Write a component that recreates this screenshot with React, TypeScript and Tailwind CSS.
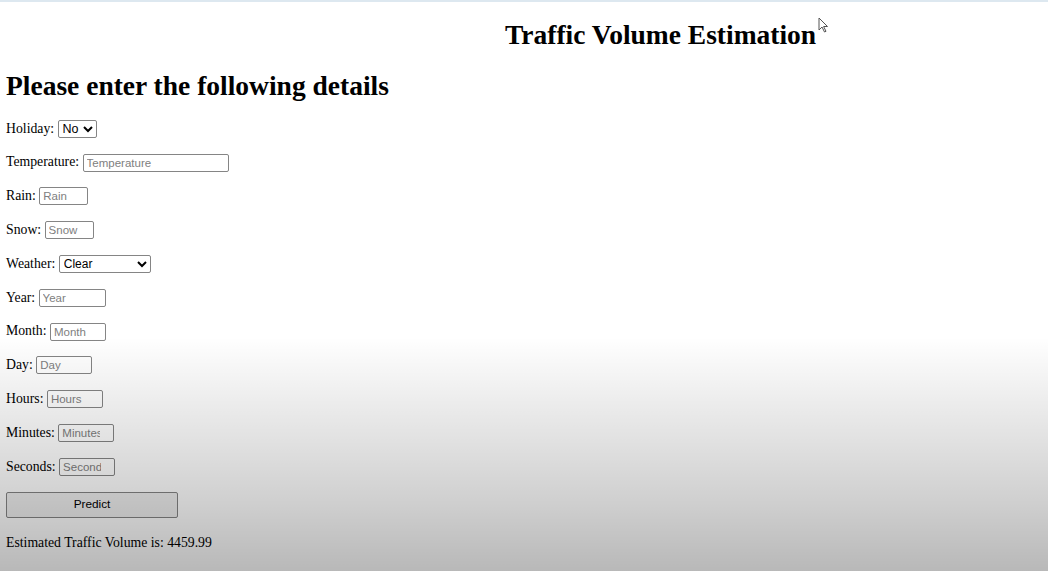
import React from 'react';

const serif = { fontFamily: '"Liberation Serif", "Times New Roman", serif' };

const fields: { label: string; w: string; num?: boolean }[] = [
  { label: 'Temperature', w: 'w-[146px]' },
  { label: 'Rain', w: 'w-[49px]' },
  { label: 'Snow', w: 'w-[49px]' },
];
const fields2: { label: string; w: string; num?: boolean }[] = [
  { label: 'Year', w: 'w-[67px]' },
  { label: 'Month', w: 'w-[56px]' },
  { label: 'Day', w: 'w-[56px]' },
  { label: 'Hours', w: 'w-[56px]', num: true },
  { label: 'Minutes', w: 'w-[56px]', num: true },
  { label: 'Seconds', w: 'w-[56px]', num: true },
];

function Field({ label, w, num }: { label: string; w: string; num?: boolean }) {
  return (
    <div className="h-[33.8px] flex items-center">
      <span>{label}:&nbsp;</span>
      <input
        placeholder={label}
        className={`${w} h-[18px] border border-[#858585] rounded-[2px] bg-white pl-[3px] ${num ? 'pr-[13px]' : 'pr-[2px]'} text-[11.5px] text-black placeholder:text-[#808080] font-['Liberation_Sans',Arial,sans-serif] outline-none`}
      />
    </div>
  );
}

export default function App() {
  return (
    <div className="relative w-[1048px] h-[571px] overflow-hidden bg-white text-black text-[13.75px]" style={serif}>
      <div className="h-[2px] bg-[#dde8f0]"></div>

      <h1 className="pl-[505px] pt-[17px] text-[27.5px] font-bold leading-[32px]">Traffic Volume Estimation</h1>

      <h2 className="pl-[6px] mt-[19px] text-[27.5px] font-bold leading-[32px]">Please enter the following details</h2>

      <form className="pl-[6px] mt-[10px]" onSubmit={(e) => e.preventDefault()}>
        <div className="h-[33.8px] flex items-center">
          <span>Holiday:&nbsp;</span>
          <select className="w-[39px] h-[18px] border border-[#858585] rounded-[2px] bg-white text-[12.5px] font-['Liberation_Sans',Arial,sans-serif]">
            <option>No</option>
            <option>Yes</option>
          </select>
        </div>
        {fields.map((f) => (
          <Field key={f.label} {...f} />
        ))}
        <div className="h-[33.8px] flex items-center">
          <span>Weather:&nbsp;</span>
          <select className="w-[92px] h-[18px] border border-[#858585] rounded-[2px] bg-white text-[12px] font-['Liberation_Sans',Arial,sans-serif]">
            <option>Clear</option>
            <option>Clouds</option>
            <option>Rain</option>
            <option>Snow</option>
          </select>
        </div>
        {fields2.map((f) => (
          <Field key={f.label} {...f} />
        ))}
        <button
          type="submit"
          className="mt-[8px] w-[172px] h-[26px] border border-[#858585] rounded-[2px] bg-[#efefef] text-[11.8px] font-['Liberation_Sans',Arial,sans-serif]"
        >
          Predict
        </button>
        <p className="mt-[15px]">Estimated Traffic Volume is: 4459.99</p>
      </form>

      {/* video player shade at the bottom */}
      <div className="absolute inset-0 pointer-events-none bg-[linear-gradient(to_bottom,rgba(0,0,0,0)_0%,rgba(0,0,0,0)_59%,rgba(0,0,0,0.04)_65%,rgba(0,0,0,0.11)_76%,rgba(0,0,0,0.19)_88%,rgba(0,0,0,0.28)_100%)]"></div>

      {/* mouse cursor */}
      <svg className="absolute left-[818px] top-[17px]" width="11" height="16" viewBox="0 0 11 16">
        <path d="M1 1 L1 13 L4 10 L6.5 15 L8 14.3 L5.6 9.5 L9.5 9.5 Z" fill="#fff" stroke="#555" strokeWidth="1" strokeLinejoin="round" />
      </svg>
    </div>
  );
}
